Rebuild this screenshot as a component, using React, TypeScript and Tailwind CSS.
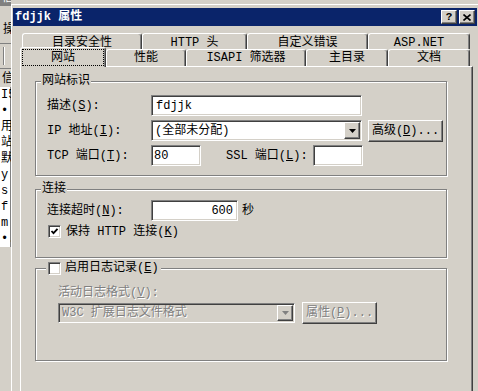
import React from "react";

const face = "font-[family-name:'Liberation_Mono','Noto_Sans_CJK_SC',monospace]";
const raised =
  "border border-t-white border-l-white border-r-[#404040] border-b-[#404040] shadow-[inset_-1px_-1px_0_#808080] bg-[#d4d0c8]";
const sunken =
  "border border-t-[#808080] border-l-[#808080] border-r-white border-b-white shadow-[inset_1px_1px_0_#404040,inset_-1px_-1px_0_#d4d0c8]";
const etched = "relative border border-[#808080] shadow-[1px_1px_0_#fff,inset_1px_1px_0_#fff]";
const dim = "text-[#808080] [text-shadow:1px_1px_0_#fff]";

function K({ c }: { c: string }) {
  return <span className="underline underline-offset-[1px]">{c}</span>;
}

function Arrow({ off }: { off?: boolean }) {
  return (
    <div className={`flex w-[16px] shrink-0 items-center justify-center ${raised}`}>
      <svg width="7" height="4" viewBox="0 0 7 4">
        <polygon points="0,0 7,0 3.5,4" fill={off ? "#808080" : "#000"} />
      </svg>
    </div>
  );
}

function Check({ on }: { on?: boolean }) {
  return (
    <div className={`flex h-[13px] w-[13px] shrink-0 items-center justify-center bg-white ${sunken}`}>
      {on && (
        <svg width="9" height="9" viewBox="0 0 9 9">
          <path d="M1.5 4 L3.5 6.2 L7.5 1.8" stroke="#000" strokeWidth="1.8" fill="none" />
        </svg>
      )}
    </div>
  );
}

const backTabs = [
  { t: "目录安全性", w: "w-[120px]" },
  { t: "HTTP 头", w: "w-[105px]" },
  { t: "自定义错误", w: "w-[121px]" },
  { t: "ASP.NET", w: "w-[102px]" },
];

const frontTabs = [
  { t: "性能", w: "w-[80px]" },
  { t: "ISAPI 筛选器", w: "w-[120px]" },
  { t: "主目录", w: "w-[82px]" },
  { t: "文档", w: "w-[82px]" },
];

const tabEdge =
  "rounded-t-[3px] border-l border-t border-r border-l-white border-t-white border-r-[#404040] shadow-[inset_-1px_0_0_#808080] bg-[#d4d0c8]";

function BackWindow() {
  const rows = ["I5", "• :", "用", "站", "默", "y", "s", "f", "m", "•."];
  return (
    <div className="flex w-[11px] shrink-0 flex-col overflow-hidden leading-[16px]">
      <div className="h-[6px] overflow-hidden bg-[#808080] text-white">
        <div className="-mt-[10px] pl-[2px]">信</div>
      </div>
      <div className="h-[16px]" />
      <div className="h-[16px] pl-[3px]">操</div>
      <div className="h-[6px] border-b border-[#808080]" />
      <div className="flex h-[24px]">
        <div className="my-[3px] ml-[3px] w-[2px] border-l border-r border-l-[#808080] border-r-white" />
      </div>
      <div className="h-[3px] border-t border-[#808080]" />
      <div className="h-[16px] pl-[2px]">信</div>
      <div className="flex h-[160px] flex-col border-r border-[#808080] bg-white pl-[1px]">
        {rows.map((r) => (
          <div key={r} className="h-[16px] whitespace-nowrap">
            {r}
          </div>
        ))}
      </div>
    </div>
  );
}

export default function App() {
  return (
    <div className={`flex h-[391px] w-[478px] overflow-hidden bg-[#d4d0c8] text-[12px] leading-[14px] text-black ${face}`}>
      <BackWindow />

      <div className="mt-[4px] flex w-[468px] shrink-0 flex-col self-start border-l border-r border-t border-l-white border-t-white border-r-[#404040] px-[1px] pt-[3px]">
        {/* title bar */}
        <div className="flex h-[18px] items-center bg-[#0a246a] pl-[2px] pr-[2px]">
          <span className="font-bold text-white">fdjjk 属性</span>
          <div className="ml-auto flex gap-[2px]">
            <div className={`flex h-[14px] w-[16px] items-center justify-center text-[11px] font-bold leading-none ${raised}`}>?</div>
            <div className={`flex h-[14px] w-[16px] items-center justify-center ${raised}`}>
              <svg width="8" height="7" viewBox="0 0 8 7">
                <path d="M0.5 0.5 L7.5 6.5 M7.5 0.5 L0.5 6.5" stroke="#000" strokeWidth="1.6" />
              </svg>
            </div>
          </div>
        </div>

        {/* tabs */}
        <div className="ml-[7px] mt-[7px] w-[453px]">
          <div className="flex h-[16px] pl-[2px]">
            {backTabs.map((t) => (
              <div key={t.t} className={`flex items-center justify-center pt-[2px] ${t.w} ${tabEdge}`}>
                {t.t}
              </div>
            ))}
          </div>
          <div className="-mt-[2px] flex h-[19px] items-end">
            <div className={`relative z-10 -mb-px flex h-[20px] w-[86px] p-[1px] ${tabEdge}`}>
              <span className="flex flex-1 items-center justify-center border border-dotted border-black">网站</span>
            </div>
            {frontTabs.map((t) => (
              <div key={t.t} className={`flex h-[17px] items-center justify-center ${t.w} ${tabEdge}`}>
                {t.t}
              </div>
            ))}
          </div>

          {/* page */}
          <div className="flex h-[340px] flex-col border-l border-r border-t border-l-white border-t-white border-r-[#404040] pl-[14px] pt-[14px] shadow-[inset_-1px_0_0_#808080]">
            {/* 网站标识 */}
            <div className={`w-[412px] pb-[9px] pl-[11px] pt-[13px] ${etched}`}>
              <span className="absolute left-[5px] top-[-8px] bg-[#d4d0c8] px-[1px]">网站标识</span>
              <div className="flex flex-col gap-[4px]">
                <div className="flex h-[21px] items-center">
                  <span className="w-[104px]">
                    描述(<K c="S" />):
                  </span>
                  <div className={`flex h-[21px] w-[211px] items-center bg-white pl-[4px] ${sunken}`}>fdjjk</div>
                </div>
                <div className="flex h-[21px] items-center">
                  <span className="w-[104px]">
                    IP 地址(<K c="I" />):
                  </span>
                  <div className={`flex h-[21px] w-[211px] bg-white p-[1px] ${sunken}`}>
                    <span className="flex flex-1 items-center pl-[2px]">(全部未分配)</span>
                    <Arrow />
                  </div>
                  <div className={`ml-[6px] flex h-[22px] w-[75px] items-center justify-center ${raised}`}>
                    高级(<K c="D" />)...
                  </div>
                </div>
                <div className="flex h-[21px] items-center">
                  <span className="w-[104px]">
                    TCP 端口(<K c="T" />):
                  </span>
                  <div className={`flex h-[21px] w-[50px] items-center bg-white pl-[2px] ${sunken}`}>80</div>
                  <span className="ml-[25px] w-[87px]">
                    SSL 端口(<K c="L" />):
                  </span>
                  <div className={`h-[21px] w-[50px] bg-white ${sunken}`} />
                </div>
              </div>
            </div>

            {/* 连接 */}
            <div className={`mt-[13px] w-[412px] pb-[19px] pl-[11px] pt-[10px] ${etched}`}>
              <span className="absolute left-[5px] top-[-8px] bg-[#d4d0c8] px-[1px]">连接</span>
              <div className="flex h-[21px] items-center">
                <span className="w-[104px]">
                  连接超时(<K c="N" />):
                </span>
                <div className={`flex h-[21px] w-[87px] items-center justify-end bg-white pr-[4px] ${sunken}`}>600</div>
                <span className="ml-[4px]">秒</span>
              </div>
              <div className="ml-[1px] mt-[4px] flex h-[13px] items-center gap-[5px]">
                <Check on />
                <span>
                  保持 HTTP 连接(<K c="K" />)
                </span>
              </div>
            </div>

            {/* 日志 */}
            <div className={`mt-[10px] w-[412px] pb-[36px] pl-[22px] pt-[17px] ${etched}`}>
              <div className="absolute left-[10px] top-[-8px] flex h-[14px] items-center gap-[4px] bg-[#d4d0c8] px-[2px]">
                <Check />
                <span>
                  启用日志记录(<K c="E" />)
                </span>
              </div>
              <div className={`h-[14px] ${dim}`}>
                活动日志格式(<K c="V" />):
              </div>
              <div className="mt-[2px] flex h-[22px] items-center">
                <div className={`flex h-[20px] w-[237px] bg-[#d4d0c8] p-[1px] ${sunken}`}>
                  <span className={`flex flex-1 items-center pl-[2px] ${dim}`}>W3C 扩展日志文件格式</span>
                  <Arrow off />
                </div>
                <div className={`ml-[7px] flex h-[22px] w-[75px] items-center justify-center ${raised} ${dim}`}>
                  属性(<K c="P" />)...
                </div>
              </div>
            </div>
          </div>
        </div>
      </div>
    </div>
  );
}
